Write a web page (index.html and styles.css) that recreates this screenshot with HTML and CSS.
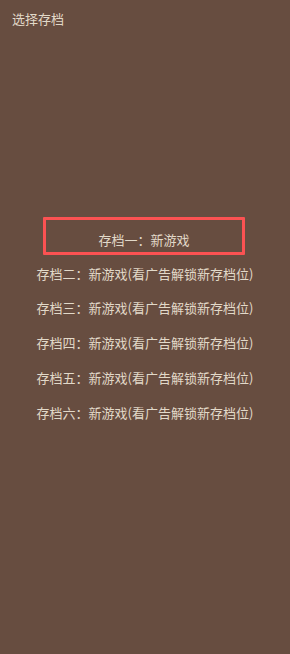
FILE: index.html
```html
<!DOCTYPE html>
<html lang="zh-CN">
<head>
<meta charset="utf-8">
<title>选择存档</title>
<link rel="stylesheet" href="styles.css">
</head>
<body>
<div class="screen">
  <header class="title">选择存档</header>
  <main class="slots">
    <div class="slot slot-selected">存档一：新游戏</div>
    <div class="slot">存档二：新游戏(看广告解锁新存档位)</div>
    <div class="slot">存档三：新游戏(看广告解锁新存档位)</div>
    <div class="slot">存档四：新游戏(看广告解锁新存档位)</div>
    <div class="slot">存档五：新游戏(看广告解锁新存档位)</div>
    <div class="slot">存档六：新游戏(看广告解锁新存档位)</div>
  </main>
</div>
</body>
</html>
```
FILE: styles.css
```css
html, body {
  margin: 0;
  padding: 0;
  background: #674d40;
}
.screen {
  width: 290px;
  height: 654px;
  background: #674d40;
  color: #e2d9c9;
  font-family: "Noto Sans CJK SC", "Noto Sans", sans-serif;
  font-size: 13px;
  display: flex;
  flex-direction: column;
}
.title {
  padding: 9px 12px 0;
  line-height: 19px;
  height: 19px;
}
.slots {
  margin-top: 189px;
  display: flex;
  flex-direction: column;
  align-items: center;
}
.slot {
  height: 34.75px;
  line-height: 34.75px;
  text-align: center;
  white-space: nowrap;
}
.slot-selected {
  box-sizing: border-box;
  width: 202px;
  height: 38px;
  line-height: 30px;
  padding-top: 5px;
  margin-left: -2px;
  margin-bottom: 1.5px;
  border: 3.5px solid #fb5252;
  border-radius: 1px;
}
```
